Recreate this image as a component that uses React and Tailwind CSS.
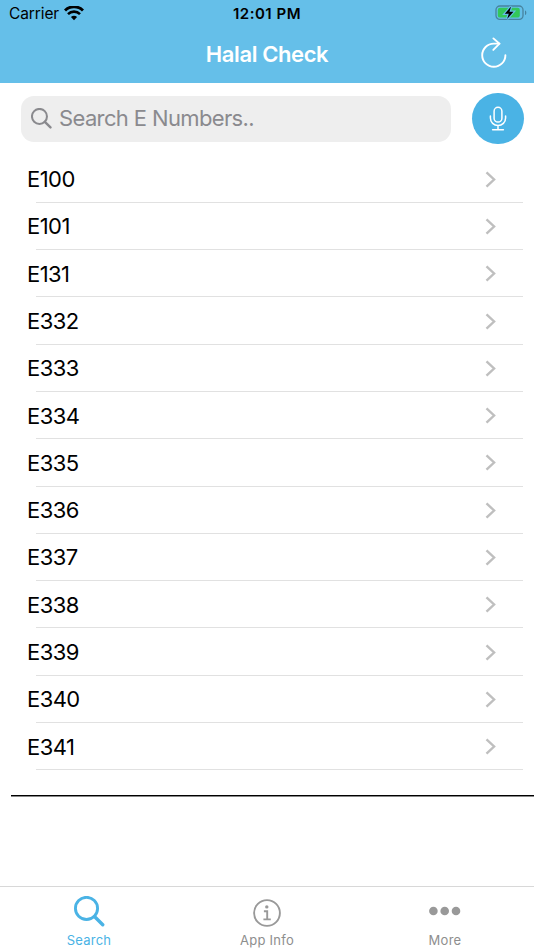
const eNumbers = [
  "E100",
  "E101",
  "E131",
  "E332",
  "E333",
  "E334",
  "E335",
  "E336",
  "E337",
  "E338",
  "E339",
  "E340",
  "E341",
];

const WifiIcon = () => (
  <svg width="20" height="15" viewBox="0 0 20 15" fill="none" stroke="black" className="-ml-px mb-[2px]">
    <path d="M1 5.1a12.8 12.8 0 0 1 18 0" strokeWidth="2.9" transform="translate(0 -.6)" />
    <path d="M4 8.1a8.6 8.6 0 0 1 12 0" strokeWidth="2.6" />
    <path d="M6.9 11.1a4.5 4.5 0 0 1 6.2 0L10 14.2Z" fill="black" stroke="none" />
  </svg>
);

const BatteryIcon = () => (
  <svg width="32" height="16" viewBox="0 0 32 16" fill="none" className="mb-[2px]">
    <rect x="1" y="1" width="27" height="13.4" rx="3.8" stroke="#47839f" strokeWidth="1.3" />
    <path d="M30 5.4c1.8.5 1.8 4.1 0 4.6Z" fill="#47839f" />
    <rect x="2.8" y="2.8" width="22" height="9.8" rx="2.2" fill="#33c759" />
    <path
      d="M16.1 1.6 9.8 8.7h4l-1.7 5.2 6.4-7.1h-4Z"
      fill="black"
      stroke="#65bfe9"
      strokeWidth="2.4"
      paintOrder="stroke"
    />
  </svg>
);

const RefreshIcon = () => (
  <svg
    width="28"
    height="32"
    viewBox="0 0 28 32"
    fill="none"
    stroke="white"
    strokeWidth="1.9"
    strokeLinecap="round"
    strokeLinejoin="round"
  >
    <path d="M25.4 18.2A11.6 11.6 0 1 1 13.8 6.6h5.6" />
    <path d="m13.4 1.4 6.1 5.3-6.2 6.2" />
  </svg>
);

const MicIcon = () => (
  <svg
    width="18"
    height="26"
    viewBox="0 0 18 26"
    fill="none"
    stroke="white"
    strokeWidth="1.5"
    strokeLinecap="round"
  >
    <rect x="5.1" y="1.3" width="7.8" height="14.8" rx="3.9" />
    <path d="M1.4 10v2a7.6 7.6 0 0 0 15.2 0v-2M9 19.6v3.9M3.6 23.8h10.8" />
  </svg>
);

const Magnifier = ({ size, stroke }) => (
  <svg width={size} height={size} viewBox="0 0 30 30" fill="none" stroke="currentColor" strokeLinecap="round">
    <circle cx="12.1" cy="12" r="10.7" strokeWidth={stroke} />
    <path d="m19.8 19.8 8 8" strokeWidth={stroke + 0.5} />
  </svg>
);

const InfoIcon = () => (
  <svg width="28" height="28" viewBox="0 0 28 28" fill="none" stroke="#999999">
    <circle cx="14" cy="14" r="12.9" strokeWidth="1.9" />
    <circle cx="13.8" cy="7.9" r="1.7" fill="#999999" stroke="none" />
    <path d="M10.9 12.2h3.3v8.1M10.4 20.4h7.4" strokeWidth="1.9" />
  </svg>
);

const DotsIcon = () => (
  <svg width="32" height="10" viewBox="0 0 32 10" fill="#999999">
    <circle cx="4.4" cy="5" r="4.3" />
    <circle cx="15.7" cy="5" r="4.3" />
    <circle cx="27" cy="5" r="4.3" />
  </svg>
);

const App = () => {
  return (
    <div className="flex h-[950px] w-[534px] flex-col overflow-hidden bg-white font-['Inter',sans-serif]">
      {/* Header */}
      <header className="h-[83px] shrink-0 bg-[#65bfe9]">
        <div className="grid h-7 grid-cols-3 items-center pr-[7px] pl-[9px] text-black">
          <div className="flex items-center gap-[6px]">
            <span className="text-[15.5px] leading-7 tracking-[-0.1px]">Carrier</span>
            <WifiIcon />
          </div>
          <span className="-ml-[2px] text-center text-[15px] leading-7 font-semibold tracking-[0.5px]">
            12:01 PM
          </span>
          <div className="flex justify-end">
            <BatteryIcon />
          </div>
        </div>
        <div className="grid h-[52px] grid-cols-[54px_1fr_54px] items-center">
          <h1 className="col-start-2 text-center text-[22px] font-semibold tracking-[-0.4px] text-white">
            Halal Check
          </h1>
          <button className="flex pb-[3px]">
            <RefreshIcon />
          </button>
        </div>
      </header>

      {/* Search */}
      <div className="flex h-[72.6px] shrink-0 items-center justify-between pr-[10.5px] pb-[1.2px] pl-[21px]">
        <div className="flex h-[46px] w-[430px] items-center gap-[7px] rounded-[13px] bg-[#eeeeee] pl-[10px] text-[#8a8a8e]">
          <Magnifier size={21} stroke={2.9} />
          <span className="text-[22px] tracking-[-0.63px]">Search E Numbers..</span>
        </div>
        <button className="flex size-[51.5px] items-center justify-center rounded-full bg-[#4ab3e5]">
          <MicIcon />
        </button>
      </div>

      {/* E number list */}
      <ul className="shrink-0">
        {eNumbers.map((code) => (
          <li key={code} className="flex h-[47.29px] flex-col pr-[11px] pl-[27px]">
            <div className="flex flex-1 items-center justify-between pr-[26px]">
              <span className="pt-[0.9px] text-[22px] leading-none tracking-[-0.55px]">{code}</span>
              <svg
                width="12"
                height="17"
                viewBox="0 0 12 17"
                fill="none"
                stroke="#bfbfbf"
                strokeWidth="2.4"
                className="mt-px"
              >
                <path d="m1.5 1.3 7.6 7.2-7.6 7.2" />
              </svg>
            </div>
            <div className="ml-[9px] h-px bg-[#e1e1e1]" />
          </li>
        ))}
      </ul>
      <div className="mt-[25px] ml-[11px] h-[2px] shrink-0 border-b border-[#888888] bg-black" />

      {/* Tab bar */}
      <nav className="mt-auto grid h-[64px] shrink-0 grid-cols-3 border-t border-[#d8d8d8] text-[13px] leading-4 tracking-[0.25px] text-[#8e8e8e]">
        <button className="flex flex-col items-center text-[#4ab3e5]">
          <span className="flex h-[45px] items-center pt-[4px]">
            <Magnifier size={31} stroke={2.8} />
          </span>
          Search
        </button>
        <button className="flex flex-col items-center">
          <span className="flex h-[45px] items-center pt-[7px]">
            <InfoIcon />
          </span>
          App Info
        </button>
        <button className="flex flex-col items-center">
          <span className="flex h-[45px] items-center pt-[3px]">
            <DotsIcon />
          </span>
          More
        </button>
      </nav>
    </div>
  );
};

export default App;
